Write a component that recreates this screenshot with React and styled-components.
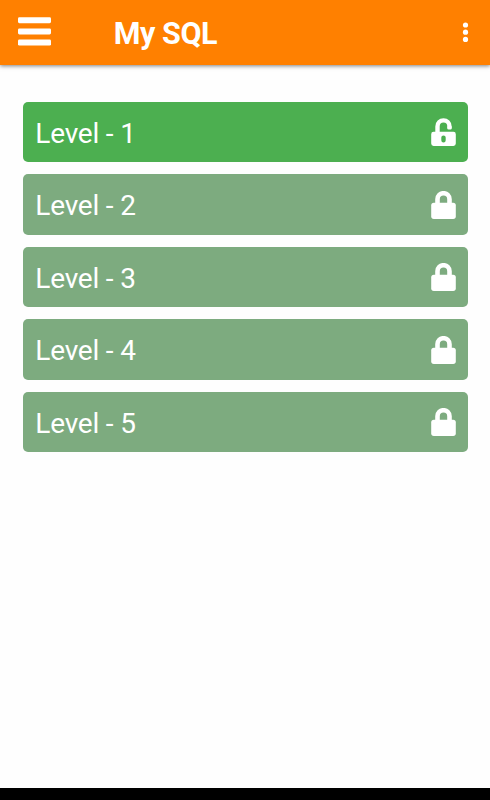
import React from 'react';
import styled, { createGlobalStyle } from 'styled-components';

const levels = [
  { id: 1, unlocked: true },
  { id: 2, unlocked: false },
  { id: 3, unlocked: false },
  { id: 4, unlocked: false },
  { id: 5, unlocked: false }
];

function MenuIcon() {
  return (
    <svg width="33" height="30" viewBox="0 0 33 30" fill="#fff">
      <rect x="0" y="0.2" width="33" height="6" rx="1.4" />
      <rect x="0" y="11.4" width="33" height="6" rx="1.4" />
      <rect x="0" y="22.6" width="33" height="6" rx="1.4" />
    </svg>
  );
}

function MoreIcon() {
  return (
    <svg width="7" height="22" viewBox="0 0 7 22" fill="#fff">
      <circle cx="3.5" cy="4" r="2.6" />
      <circle cx="3.5" cy="11.2" r="2.6" />
      <circle cx="3.5" cy="18.4" r="2.6" />
    </svg>
  );
}

function LockIcon() {
  return (
    <svg width="25" height="29" viewBox="0 0 25 29">
      <path
        d="M6.5 14V8.2a6 6 0 0 1 12 0V14"
        fill="none"
        stroke="#fff"
        strokeWidth="4.6"
      />
      <rect x="0.2" y="11.8" width="24.6" height="16.1" rx="2.6" fill="#fff" />
    </svg>
  );
}

function UnlockIcon() {
  return (
    <svg width="25" height="29" viewBox="0 0 25 29">
      <path
        d="M6.5 15V8.4a6 6 0 0 1 12 0V9.4"
        fill="none"
        stroke="#fff"
        strokeWidth="4.4"
      />
      <rect x="16.3" y="8" width="4.4" height="3.4" rx="1.2" fill="#fff" />
      <path
        d="M2.6 13.8h19.8a2.4 2.4 0 0 1 2.4 2.4v9.4a2.4 2.4 0 0 1-2.4 2.4H2.6a2.4 2.4 0 0 1-2.4-2.4v-9.4a2.4 2.4 0 0 1 2.4-2.4zM12.5 17.4a2.2 2.2 0 0 0-2.2 2.2v2.6a2.2 2.2 0 0 0 4.4 0v-2.6a2.2 2.2 0 0 0-2.2-2.2z"
        fill="#fff"
        fillRule="evenodd"
      />
    </svg>
  );
}

function App() {
  return (
    <Screen>
      <GlobalStyle />
      <Header>
        <IconButton aria-label="Menu">
          <MenuIcon />
        </IconButton>
        <Title>My SQL</Title>
        <IconButton aria-label="More">
          <MoreIcon />
        </IconButton>
      </Header>
      <LevelList>
        {levels.map(level => (
          <LevelItem key={level.id} $unlocked={level.unlocked}>
            <LevelName>Level - {level.id}</LevelName>
            <LevelStatus>
              {level.unlocked ? <UnlockIcon /> : <LockIcon />}
            </LevelStatus>
          </LevelItem>
        ))}
      </LevelList>
      <BottomBar />
    </Screen>
  );
}

export default App;

/* #### STYLED COMPONENTS #### */

const GlobalStyle = createGlobalStyle`
  body {
    margin: 0;
    background: #fefefe;
  }
`;

const Screen = styled.div`
  display: flex;
  flex-direction: column;
  height: 800px;
  background: #fefefe;
  color: #fff;
  font-family: Roboto, Arial, sans-serif;
`;

const Header = styled.header`
  display: flex;
  align-items: center;
  flex-shrink: 0;
  box-sizing: border-box;
  height: 65px;
  padding: 0 21px 1px 18px;
  background: #ff8000;
  box-shadow: 0 1px 4px rgba(0, 0, 0, 0.5);
`;

const IconButton = styled.button`
  display: flex;
  padding: 0;
  border: none;
  background: none;
  cursor: pointer;
`;

const Title = styled.h1`
  flex: 1;
  margin: 0 0 0 62.8px;
  padding-top: 3px;
  font-size: 30.5px;
  font-weight: 700;
  letter-spacing: -0.45px;
  line-height: 36px;
`;

const LevelList = styled.ul`
  display: flex;
  flex: 1;
  flex-direction: column;
  gap: 12px;
  margin: 0;
  padding: 36.7px 22.5px 0 23.3px;
  list-style: none;
`;

const LevelItem = styled.li`
  display: flex;
  align-items: center;
  justify-content: space-between;
  box-sizing: border-box;
  height: 60.5px;
  padding: 0 11.5px 0 12px;
  border-radius: 5px;
  background: ${props => (props.$unlocked ? '#4caf50' : '#7dab7f')};
  cursor: ${props => (props.$unlocked ? 'pointer' : 'default')};
`;

const LevelName = styled.span`
  padding-top: 4px;
  font-size: 28px;
  letter-spacing: -0.2px;
  line-height: 34px;
`;

const LevelStatus = styled.span`
  display: flex;
  padding-top: 1.5px;
`;

const BottomBar = styled.div`
  flex-shrink: 0;
  height: 12px;
  background: #000;
`;
